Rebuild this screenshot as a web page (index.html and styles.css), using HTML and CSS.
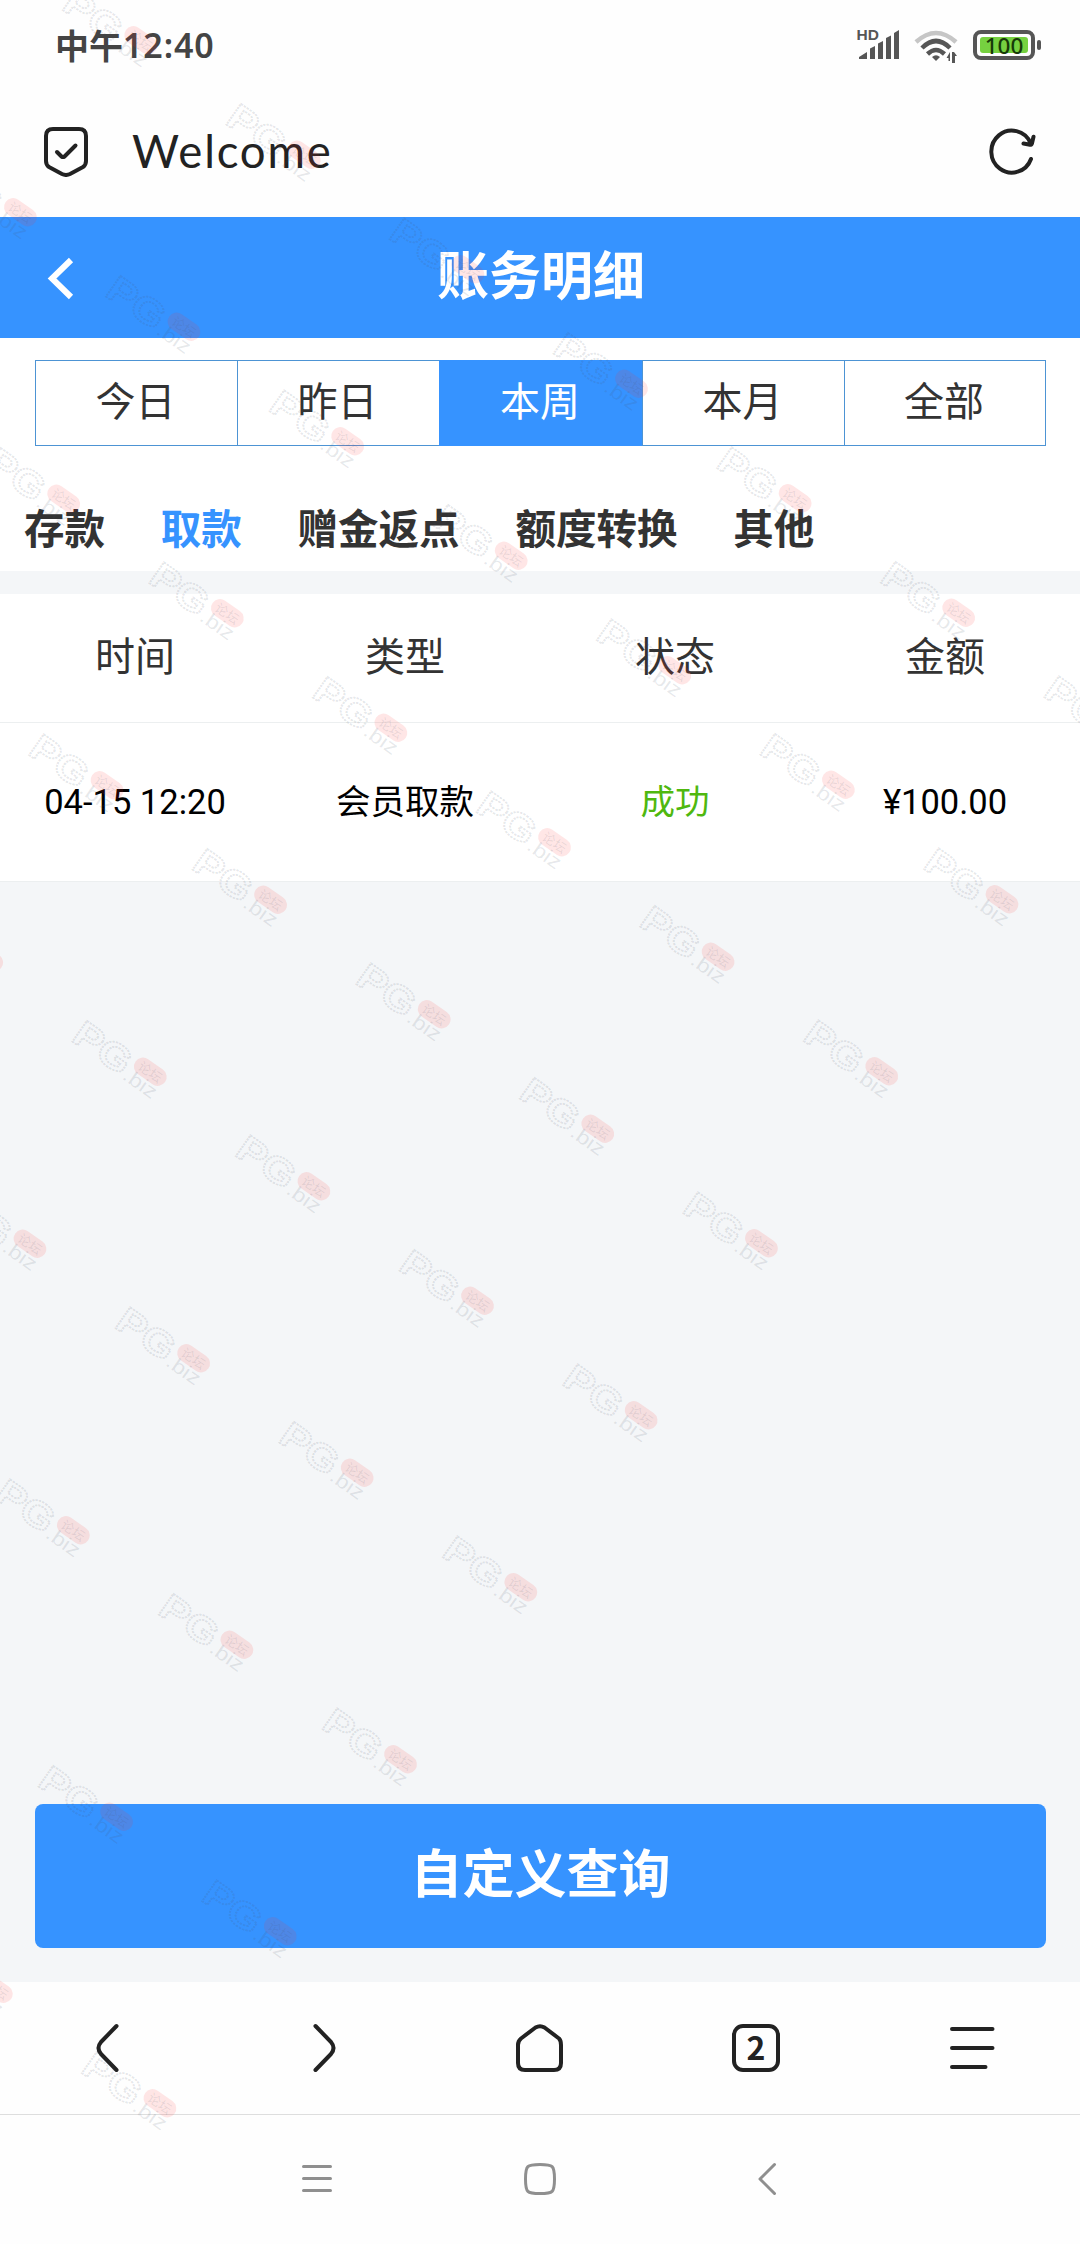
FILE: index.html
```html
<!DOCTYPE html>
<html lang="zh-CN">
<head>
<meta charset="utf-8">
<title>账务明细</title>
<link rel="stylesheet" href="styles.css">
</head>
<body>
<div class="screen">
  <div class="status-bar">
    <div class="clock"><span>中午</span><span class="clock-time">12:40</span></div>
    <svg class="status-icons" width="190" height="44" viewBox="853 22 190 44">
      <text class="hd" x="856.5" y="40">HD</text>
      <g fill="#565656">
        <path d="M859 59v-2l8-5v7zM870 59V48.500l5-2.500v13zM878 59V43.500l5-2.500v18zM886 59V38l5-2.500V59zM894 59V33l5-3v29z"/>
        <path d="M936 61l-4-4q4-3.500 8 0z"/>
        <path d="M950 52v9h-1.500v-3h-2zM952 63v-11h2l3 4h-2v7z"/>
      </g>
      <g fill="none" stroke="#565656" stroke-width="4.500">
        <path stroke="#c6c6c6" d="M916 42q20-18 40 0"/>
        <path d="M922 48q14-14 28 0"/>
        <path d="M927.500 54q8.500-8 17 0"/>
        <rect x="975" y="32" width="58" height="26" rx="6" stroke-width="4"/>
      </g>
      <rect x="980" y="37" width="48" height="16" rx="3" fill="#76d140"/>
      <rect x="1037" y="40" width="4" height="10" rx="2" fill="#565656"/>
      <text class="charge" x="1004" y="53.500" text-anchor="middle">100</text>
    </svg>
  </div>

  <div class="address-bar">
    <svg width="48" height="52" viewBox="42 126 48 52" class="line-icon">
      <path d="M53 130h26q7 0 7 7v25q0 4-3 6l-13 7q-4 2-8 0l-13-7q-3-2-3-6v-25q0-7 7-7z"/>
      <path d="M57 153l4.500 4.500q1.500 1 3 0L75.500 146.500"/>
    </svg>
    <span class="address">Welcome</span>
    <svg width="50" height="50" viewBox="987 126 50 50" class="line-icon">
      <path d="M1030.500 143A20.500 21 0 1 0 1031 159M1023.500 143.500l6.500 1.300q1.500 0 2-1.500l1.500-6.500"/>
    </svg>
  </div>

  <div class="page-header">
    <svg class="header-back" width="28" height="44" viewBox="46 257 28 44"><path d="M71 260L52 278.500 71 297"/></svg>
    <h1 class="page-title">账务明细</h1>
  </div>

  <div class="filters">
    <div class="periods">
      <span class="period">今日</span>
      <span class="period">昨日</span>
      <span class="period period-active">本周</span>
      <span class="period">本月</span>
      <span class="period">全部</span>
    </div>
    <div class="categories">
      <span>存款</span><span class="category-active">取款</span><span>赠金返点</span><span>额度转换</span><span>其他</span>
    </div>
  </div>

  <div class="records">
    <div class="row row-head"><span>时间</span><span>类型</span><span>状态</span><span>金额</span></div>
    <div class="row row-item"><span>04-15 12:20</span><span class="label">会员取款</span><span class="label success">成功</span><span>¥100.00</span></div>
  </div>

  <div class="footer">
    <div class="query-button">自定义查询</div>
  </div>

  <div class="browser-nav">
    <svg width="56" height="56" viewBox="80 2020 56 56" class="line-icon"><path d="M116.500 2026L101 2042q-5 6 0 12L116.500 2070"/></svg>
    <svg width="56" height="56" viewBox="296 2020 56 56" class="line-icon"><path d="M315.500 2026L331 2042q5 6 0 12L315.500 2070"/></svg>
    <svg width="56" height="56" viewBox="512 2020 56 56" class="line-icon"><path d="M518 2045q0-4 3-6.500l14.500-11q4.500-2.500 9 0l14.500 11q2 2 2 6.500v18q0 7-7 7h-29q-7 0-7-7z"/></svg>
    <span class="tab-count">2</span>
    <svg width="56" height="56" viewBox="944 2020 56 56" class="line-icon"><path d="M952 2029h40.500M952 2048h40.500M952 2067h33.500"/></svg>
  </div>

  <div class="system-nav">
    <svg width="40" height="40" viewBox="297 2159 40 40" class="system-icon"><path d="M303.500 2166.500h27M303.500 2178.500h27M303.500 2190.500h27"/></svg>
    <svg width="40" height="40" viewBox="522 2159 40 40" class="system-icon"><path d="M540 2164.500c13 0 14.500 1 14.500 14.500s-1.500 14.500-14.500 14.500-14.500-1-14.500-14.500 1.500-14.500 14.500-14.500z"/></svg>
    <svg width="40" height="40" viewBox="747 2159 40 40" class="system-icon"><path d="M774.500 2164.500l-14.500 14.500 14.500 14.500"/></svg>
  </div>

  <svg class="watermark" width="1080" height="2244" viewBox="0 0 1080 2244" aria-hidden="true">
    <defs>
      <g id="mark" transform="rotate(35)">
        <text class="mark-name" x="-84" y="20" textLength="63" lengthAdjust="spacingAndGlyphs">PG</text>
        <rect x="-18" y="-9" width="36" height="18" rx="9" fill="#f33" fill-opacity=".12"/>
        <text class="mark-badge" x="-13" y="5">论坛</text>
        <text class="mark-domain" x="-20" y="22" textLength="37" lengthAdjust="spacingAndGlyphs">.biz</text>
      </g>
      <g id="strip">
        <use href="#mark"/>
        <use href="#mark" x="-120.300" y="172"/>
        <use href="#mark" x="-240.600" y="344"/>
        <use href="#mark" x="-360.900" y="516"/>
        <use href="#mark" x="-481.200" y="688"/>
        <use href="#mark" x="-601.500" y="860"/>
        <use href="#mark" x="-721.800" y="1032"/>
        <use href="#mark" x="-842.100" y="1204"/>
        <use href="#mark" x="-962.400" y="1376"/>
      </g>
    </defs>
    <use href="#strip" x="140.700" y="40.300"/>
    <use href="#strip" x="304.300" y="154.800"/>
    <use href="#strip" x="467.900" y="269.300"/>
    <use href="#strip" x="631.500" y="383.800"/>
    <use href="#strip" x="795.100" y="498.300"/>
    <use href="#strip" x="958.700" y="612.800"/>
    <use href="#strip" x="1122.300" y="727.300"/>
  </svg>
</div>
</body>
</html>
```
FILE: styles.css
```css
* { box-sizing: border-box; }

body {
  margin: 0;
  font-family: Roboto, "Noto Sans CJK SC", sans-serif;
  color: #333;
  background: #fff;
}

.screen {
  position: relative;
  display: flex;
  flex-direction: column;
  width: 1080px;
  height: 2244px;
  overflow: hidden;
  background: #f4f6f8;
}

/* Phone status bar */
.status-bar {
  display: flex;
  justify-content: space-between;
  align-items: center;
  height: 88px;
  padding: 0 37px 0 55px;
  background: #fefefe;
}

.clock {
  display: flex;
  align-items: center;
  padding-top: 1px;
  font: 700 34px/48px "Noto Sans CJK SC", sans-serif;
  color: #444;
}

.clock-time {
  font: 600 34px/48px "Noto Sans", sans-serif;
  letter-spacing: 0.9px;
}

.hd { font: 700 15.500px "Liberation Sans", sans-serif; fill: #565656; }
.charge { font: 500 22.500px "Noto Sans", sans-serif; fill: #173a08; }

/* Browser address bar */
.address-bar {
  display: flex;
  align-items: center;
  height: 129px;
  padding: 0 43px 4px 42px;
  background: #fefefe;
}

.address {
  flex: 1;
  padding-left: 42px;
  font: 400 45.500px/60px Lato, sans-serif;
  letter-spacing: 1.800px;
  color: #222;
}

.line-icon {
  fill: none;
  stroke: #222;
  stroke-width: 4;
  stroke-linecap: round;
  stroke-linejoin: round;
}

/* Page header */
.page-header {
  display: grid;
  grid-template-columns: 46px 1fr 46px;
  align-items: center;
  height: 121px;
  padding: 2px 44px 0 46px;
  color: #fff;
  background: #3693ff;
}

.header-back { fill: none; stroke: #fff; stroke-width: 6; }

.page-title {
  margin: 0;
  padding-bottom: 2px;
  font-size: 52px;
  line-height: 72px;
  text-align: center;
}

/* Filters */
.filters {
  height: 233px;
  padding: 22px 34px 0 35px;
  background: #fff;
}

.periods {
  display: grid;
  grid-template-columns: 202px 202px 203px 202px 202px;
  height: 86px;
}

.period {
  display: flex;
  align-items: center;
  justify-content: center;
  padding: 0 2px 8px 0;
  font-size: 40px;
  border: solid #4d94d4;
  border-width: 1px 0 1px 1px;
}

.period:last-child { border-right-width: 1px; }
.period.period-active { color: #fff; background: #3693ff; border-color: #3693ff; }

.categories {
  display: flex;
  gap: 55.800px;
  margin: 54px 0 0 -11px;
  font-size: 40.500px;
  font-weight: 700;
  line-height: 60px;
}

.category-active { color: #3693ff; }

/* Records table */
.records { margin-top: 23px; background: #fff; }

.row {
  display: grid;
  grid-template-columns: repeat(4, 270px);
  align-items: center;
  text-align: center;
  border-bottom: 1px solid #eceff0;
}

.row-head { height: 129px; padding-bottom: 8px; font-size: 40px; }
.row-item { height: 159px; font-size: 34.500px; color: #000; }
.row-item .label { padding-bottom: 7px; }
.row-item .success { color: #4fb80f; }

/* Query action */
.footer { margin-top: auto; padding: 0 34px 34px 35px; }

.query-button {
  height: 144px;
  border-radius: 8px;
  font-size: 52px;
  font-weight: 700;
  line-height: 144px;
  text-align: center;
  color: #fff;
  background: #3693ff;
}

/* Browser toolbar */
.browser-nav {
  display: grid;
  grid-template-columns: repeat(5, 216px);
  place-items: center;
  height: 133px;
  border-bottom: 1px solid #dedede;
  background: #fefefe;
}

.tab-count {
  width: 48px;
  height: 48px;
  border: 4px solid #222;
  border-radius: 11px;
  font: 600 32px/36px "Noto Sans CJK SC", sans-serif;
  text-align: center;
  color: #222;
}

/* System navigation */
.system-nav {
  display: flex;
  justify-content: space-between;
  height: 129px;
  padding: 44px 293px 0 297px;
  background: #fefefe;
}

.system-icon {
  fill: none;
  stroke: #8f8f8f;
  stroke-width: 3;
  stroke-linecap: round;
  stroke-linejoin: round;
}

/* Watermark */
.watermark { position: absolute; inset: 0; pointer-events: none; }

.mark-name {
  font: 700 37px "Liberation Sans", sans-serif;
  fill: #465060;
  fill-opacity: 0.02;
  stroke: #465060;
  stroke-opacity: 0.15;
  stroke-width: 1.800px;
  stroke-dasharray: 2 1;
}

.mark-domain {
  font: 400 20px "Liberation Sans", sans-serif;
  fill: #465060;
  fill-opacity: 0.13;
}

.mark-badge {
  font: 400 13px "Noto Sans CJK SC", sans-serif;
  fill: #465060;
  fill-opacity: 0.12;
}
```
